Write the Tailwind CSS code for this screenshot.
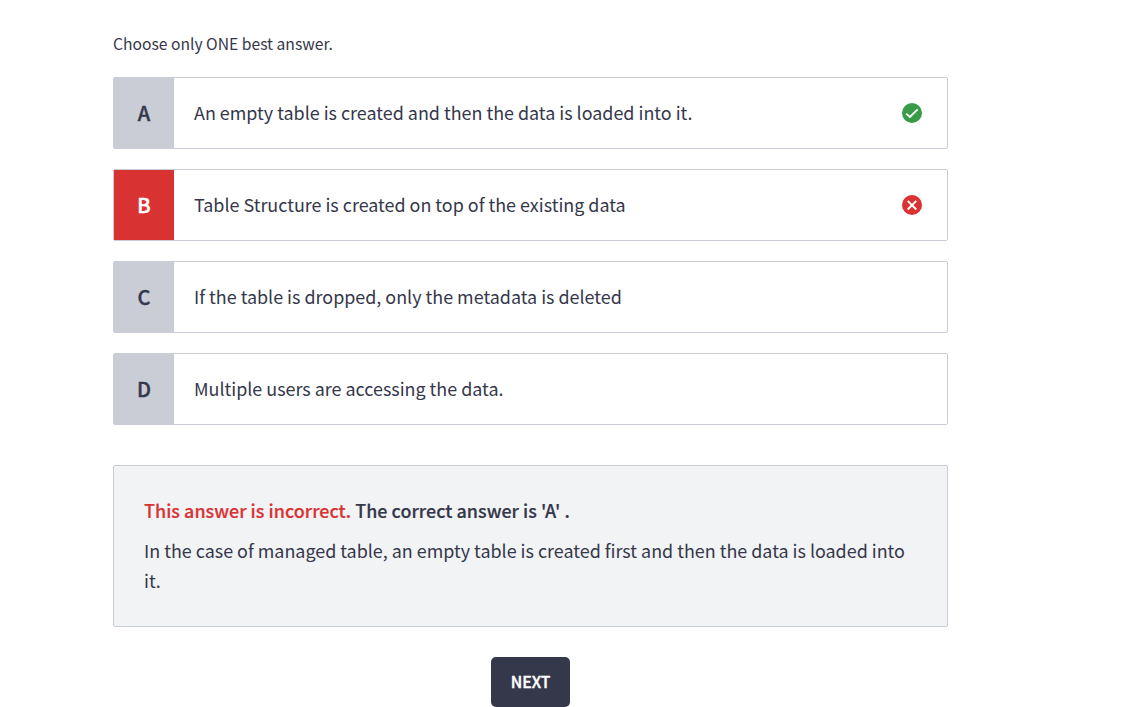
<!DOCTYPE html>
<html lang="en">
<head>
<meta charset="utf-8">
<title>Quiz</title>
<script src="https://cdn.jsdelivr.net/npm/@tailwindcss/browser@4"></script>
</head>
<body class="bg-white text-[#35374a] font-['Noto_Sans_CJK_SC','Noto_Sans',sans-serif]">
<main class="ml-[113px] w-[835px] pt-[34px]">
  <p class="h-5 text-[15.67px] leading-5"><span>Choose only ONE best answer.</span></p>
  <ul class="mt-[23px] flex flex-col gap-5 text-[17.92px] leading-7">
    <li class="flex h-[72px] items-center rounded-xs border border-[#cacdd6] pr-[25px]">
      <span class="flex h-full w-[60px] items-center justify-center bg-[#cacdd6] text-[20px] font-medium [-webkit-text-stroke:0.4px]">A</span>
      <span class="mb-[2px] ml-5 flex-1"><span>An empty table is created and then the data is loaded into it.</span></span>
      <svg class="size-5" viewBox="0 0 20 20"><circle cx="10" cy="10" r="10" fill="#389b48"/><path d="M4.2 10.6l3.7 3.3 7.8-7.6" fill="none" stroke="#fff" stroke-width="1.8"/></svg>
    </li>
    <li class="flex h-[72px] items-center rounded-xs border border-[#cacdd6] pr-[25px]">
      <span class="flex h-full w-[60px] items-center justify-center bg-[#d93232] text-[20px] font-medium text-white [-webkit-text-stroke:0.5px]">B</span>
      <span class="mb-[2px] ml-5 flex-1"><span>Table Structure is created on top of the existing data</span></span>
      <svg class="size-5" viewBox="0 0 20 20"><circle cx="10" cy="10" r="10" fill="#d93232"/><path d="M5.7 5.9l8.6 8.6M14.3 5.9l-8.6 8.6" fill="none" stroke="#fff" stroke-width="1.9"/></svg>
    </li>
    <li class="flex h-[72px] items-center rounded-xs border border-[#cacdd6] pr-[25px]">
      <span class="flex h-full w-[60px] items-center justify-center bg-[#cacdd6] text-[20px] font-medium [-webkit-text-stroke:0.4px]">C</span>
      <span class="mb-[2px] ml-5 flex-1"><span>If the table is dropped, only the metadata is deleted</span></span>
    </li>
    <li class="flex h-[72px] items-center rounded-xs border border-[#cacdd6] pr-[25px]">
      <span class="flex h-full w-[60px] items-center justify-center bg-[#cacdd6] text-[20px] font-medium [-webkit-text-stroke:0.4px]">D</span>
      <span class="mb-[2px] ml-5 flex-1"><span>Multiple users are accessing the data.</span></span>
    </li>
  </ul>
  <section class="mt-10 h-[162px] rounded-xs border border-[#cacdd6] bg-[#f1f3f5] px-[30px] pt-[29px] text-[17.92px] leading-[30px]">
    <p class="font-medium tracking-[0.04px] [-webkit-text-stroke:0.2px]"><span class="text-[#d93232]">This answer is incorrect.</span> <span>The correct answer is 'A' .</span></p>
    <p class="mt-[10px]">In the case of managed table, an empty table is created first and then the data is loaded into it.</p>
  </section>
  <button class="mx-auto mt-[30px] flex h-[50px] w-[79px] items-center justify-center rounded-[5px] bg-[#35374a] text-[15.7px] font-medium text-white [-webkit-text-stroke:0.4px]"><span>NEXT</span></button>
</main>
</body>
</html>
